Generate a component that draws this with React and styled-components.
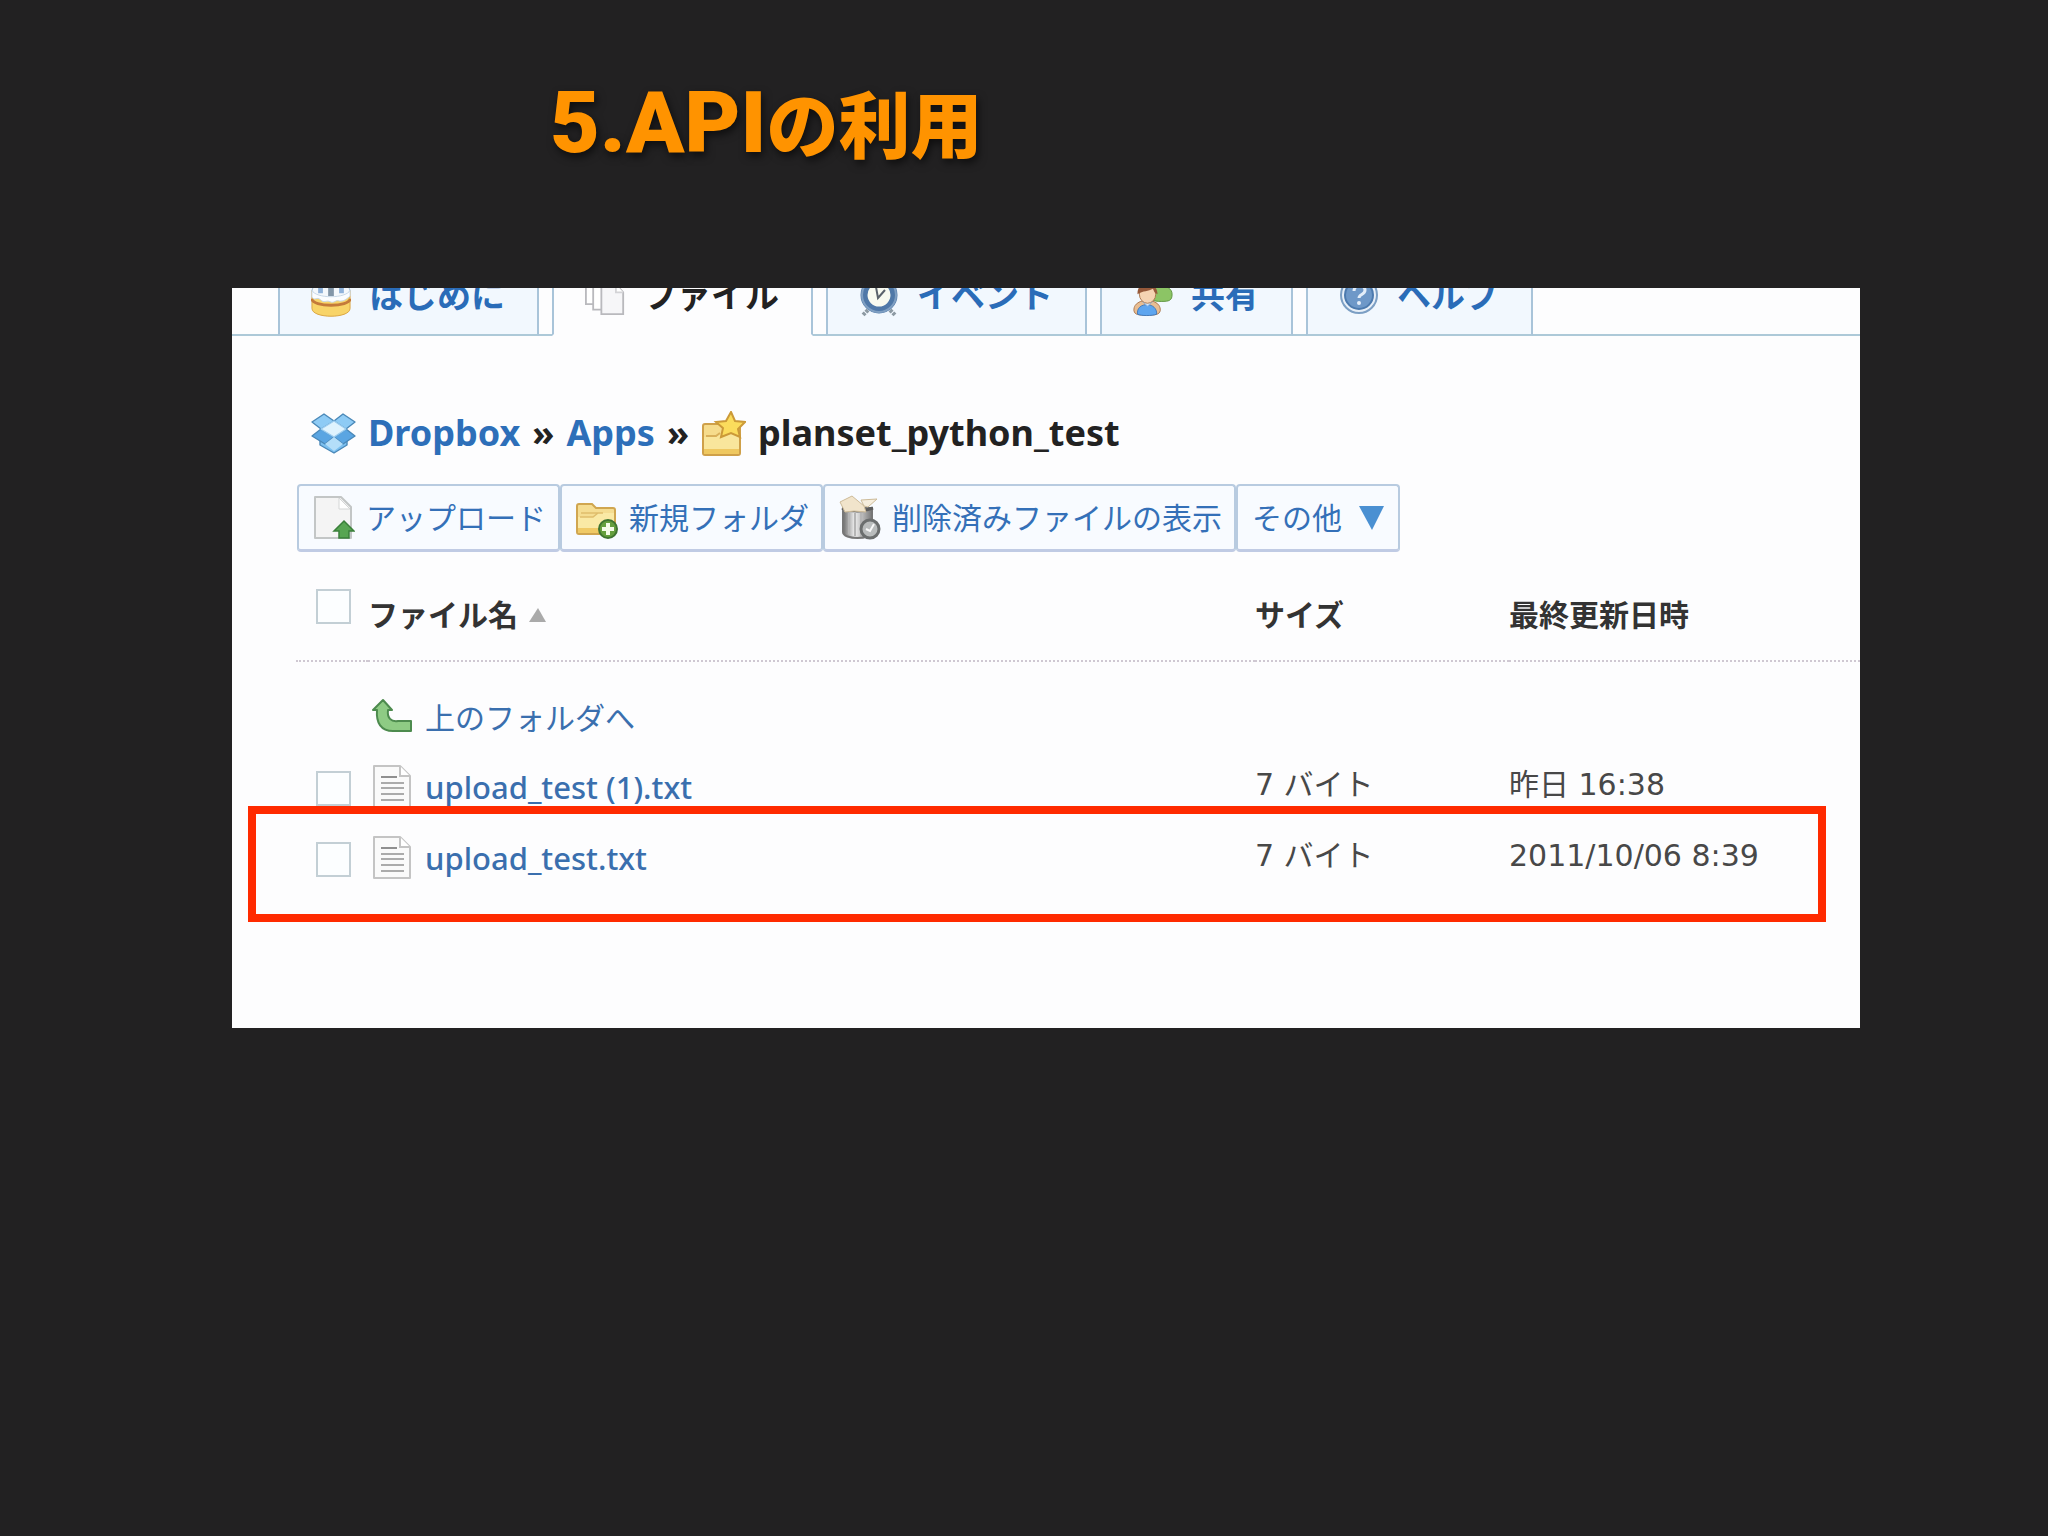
import React from 'react';
import styled, { createGlobalStyle } from 'styled-components';

const jp = '"Noto Sans CJK JP", sans-serif';

const tabs = [
    { label: 'はじめに', icon: CakeIcon },
    { label: 'ファイル', icon: PagesIcon, active: true },
    { label: 'イベント', icon: ClockIcon },
    { label: '共有', icon: PeopleIcon },
    { label: 'ヘルプ', icon: HelpIcon },
];

const actions = [
    { label: 'アップロード', icon: UploadIcon },
    { label: '新規フォルダ', icon: NewFolderIcon },
    { label: '削除済みファイルの表示', icon: TrashIcon },
];

const files = [
    { name: 'upload_test (1).txt', size: '7 バイト', date: '昨日 16:38' },
    { name: 'upload_test.txt', size: '7 バイト', date: '2011/10/06 8:39' },
];

function CakeIcon() {
    return (
        <svg width="42" height="44" viewBox="0 0 42 44">
            <path d="M1 16v19c0 11 40 11 40 0V16z" fill="#f8d468" stroke="#d9a441" />
            <path d="M1 25c0 9 40 9 40 0" fill="none" stroke="#c47a3a" strokeWidth="3" />
            <ellipse cx="21" cy="16" rx="20" ry="9" fill="#f4f8fc" stroke="#9db9d4" />
            <path d="M1 16v7c3 5 5-1 9 3s6 0 10 2 6-2 9-1 7 0 12-5v-6c-4 9-36 9-40 0z" fill="#fbfdff" stroke="#c5d6e6" />
            <path d="M10 4v15M32 4v15" stroke="#8fb2da" strokeWidth="5" />
            <path d="M21 4v18" stroke="#8296a8" strokeWidth="6" />
            <path d="M21 0v11" stroke="#e3c255" strokeWidth="4" />
        </svg>
    );
}

function PagesIcon() {
    return (
        <svg width="44" height="44" viewBox="0 0 44 44" stroke="#b9b9bd" strokeWidth="2">
            <path d="M1 2h18v29H1z" fill="#fff" />
            <path d="M9 5h18v32H9z" fill="#fff" />
            <path d="M18 9h16l8 9v24H18z" fill="#f6f6f8" />
            <path d="M34 9v9h8" fill="#fff" stroke="#d3d3d6" />
        </svg>
    );
}

function ClockIcon() {
    return (
        <svg width="40" height="44" viewBox="0 0 40 44">
            <path d="M9 36l-5 5M31 36l5 5" stroke="#8d9aa3" strokeWidth="4" strokeDasharray="3 1" />
            <circle cx="20" cy="21" r="15" fill="#f8faf0" stroke="#4f78a8" strokeWidth="7" />
            <circle cx="20" cy="21" r="17" fill="none" stroke="#7f9fc2" strokeWidth="2" />
            <path d="M17 13l2 11 7-8" fill="none" stroke="#5a626b" strokeWidth="2" />
        </svg>
    );
}

function PeopleIcon() {
    return (
        <svg width="44" height="44" viewBox="0 0 44 44">
            <circle cx="31" cy="9" r="8" fill="#b98c58" />
            <path d="M19 20c0-12 24-12 24 0 0 7-3 8-12 8s-12-2-12-8z" fill="#8cc465" stroke="#5e9440" />
            <path d="M1 38c-1-15 30-15 29 0-1 5-6 5-15 5s-13 0-14-5z" fill="#e8bd92" stroke="#a9744a" />
            <path d="M5 42c-2-14 22-14 21 0-5 2-17 2-21 0z" fill="#5da5ef" stroke="#3d76b8" />
            <path d="M10 28l6 5 6-5" fill="#d5e8fb" stroke="#8bb6e4" />
            <ellipse cx="16" cy="20" rx="9" ry="10" fill="#f5d3b2" stroke="#a9744a" />
            <path d="M5 20C4 4 26 3 27 20c-3-1-4-3-5-6-5 3-11 2-17 6z" fill="#96593a" />
        </svg>
    );
}

function HelpIcon() {
    return (
        <svg width="40" height="44" viewBox="0 0 40 44">
            <circle cx="20" cy="21" r="18" fill="#e7eff8" stroke="#7c9fc4" strokeWidth="2" />
            <circle cx="20" cy="21" r="14" fill="#6e98c8" stroke="#4c7aae" strokeWidth="2" />
            <path d="M15 17c0-7 11-7 11-1 0 5-6 4-6 8" fill="none" stroke="#e4eef9" strokeWidth="3" />
            <circle cx="20" cy="29" r="2" fill="#e4eef9" />
        </svg>
    );
}

function BoxLogo() {
    return (
        <svg width="45" height="42" viewBox="0 0 45 42" stroke="#4a88b8" strokeWidth="1.4" strokeLinejoin="round">
            <path d="M9 22v11l14 8 13-8V22l-13-5z" fill="#7cc0f0" />
            <path d="M13 2l10 7-13 8L1 10z" fill="#8ecbf5" />
            <path d="M32 2l12 8-9 7-12-8z" fill="#8ecbf5" />
            <path d="M10 17l13 8-9 7L1 24z" fill="#5aa5e2" />
            <path d="M35 17l9 7-12 8-9-7z" fill="#5aa5e2" />
            <path d="M23 9l12 8-12 8-13-8z" fill="#dff3fe" stroke="#9ccdf0" />
            <path d="M14 32l9-7 9 7-9 7z" fill="#b4def9" stroke="none" />
        </svg>
    );
}

function StarFolderIcon() {
    return (
        <svg width="45" height="45" viewBox="0 0 45 45">
            <path d="M2 15q0-2 2-2h14l4 4h17v25q0 2-2 2H4q-2 0-2-2z" fill="#f6dc8c" stroke="#cfa049" strokeWidth="2" />
            <path d="M3 26h12l4-4h19v20H3z" fill="#f9e69c" />
            <path d="M5 25h10l4-3" fill="none" stroke="#d9b05a" strokeWidth="2" />
            <path d="M3 38h35v5H3z" fill="#efc860" />
            <path d="M30 1l4 9 10 1-7 7 2 8-9-4-10 4 2-9-7-6 10-1z" fill="#fbdc5c" stroke="#cc9a38" strokeWidth="2" />
        </svg>
    );
}

function UploadIcon() {
    return (
        <svg width="42" height="45" viewBox="0 0 42 45">
            <path d="M2 2h26l10 10v31H2z" fill="#f4f4f4" stroke="#c3c6c6" strokeWidth="2" strokeLinejoin="round" />
            <path d="M26 3v11h11z" fill="#fff" stroke="#d4d6d6" />
            <path d="M31 26l10 10h-5v7H26v-7h-5z" fill="#57a552" stroke="#3a7f3a" strokeWidth="1.5" />
        </svg>
    );
}

function NewFolderIcon() {
    return (
        <svg width="42" height="45" viewBox="0 0 42 45">
            <path d="M1 11q0-2 2-2h13l4 4h17q2 0 2 2v22q0 2-2 2H3q-2 0-2-2z" fill="#f5dd92" stroke="#d0a650" strokeWidth="2" />
            <path d="M2 22h15l5-4h16v19H2z" fill="#fae9a5" />
            <path d="M5 18h22M4 22h13l5-4" fill="none" stroke="#dfbd6c" strokeWidth="1.5" />
            <path d="M2 33h36v5H2z" fill="#f0ca66" />
            <circle cx="32" cy="34" r="9" fill="#659f3d" stroke="#3f7430" strokeWidth="2" />
            <path d="M32 28v12M26 34h12" stroke="#f4fbe8" strokeWidth="4" />
        </svg>
    );
}

function TrashIcon() {
    return (
        <svg width="42" height="45" viewBox="0 0 42 45">
            <defs>
                <linearGradient id="can" x1="0" x2="1" y1="0" y2="0">
                    <stop offset="0" stopColor="#6c6c6c" />
                    <stop offset="0.4" stopColor="#efefef" />
                    <stop offset="1" stopColor="#777" />
                </linearGradient>
            </defs>
            <path d="M4 13h29v24c0 8-29 8-29 0z" fill="url(#can)" stroke="#777" strokeWidth="2" />
            <path d="M10 18v21M16 18v23M22 18v23" stroke="#b5b5b5" strokeWidth="2" />
            <path d="M3 13q15 6 31 0" fill="none" stroke="#5c5c5c" strokeWidth="3" />
            <path d="M1 7l12-6 12 10 2 6-12-1-9 1z" fill="#f1e4cb" stroke="#cdbb99" />
            <path d="M22 5l16-1-9 8-4-1z" fill="#f6eedd" stroke="#cdbb99" />
            <circle cx="31" cy="34" r="9" fill="#b9bcbc" stroke="#6b6e6e" strokeWidth="3" />
            <path d="M27 34l4 2 4-7" fill="none" stroke="#f8f8f8" strokeWidth="2" />
        </svg>
    );
}

function UpArrowIcon() {
    return (
        <svg width="42" height="36" viewBox="0 0 42 36">
            <path d="M12 2l9 10h-4c-1 8 3 12 10 11h13v10H22C10 33 5 25 6 12H2z" fill="#8ecb84" stroke="#4d8b4e" strokeWidth="2" strokeLinejoin="round" />
        </svg>
    );
}

function TextFileIcon() {
    return (
        <svg width="42" height="45" viewBox="0 0 42 45">
            <path d="M3 2h26l10 10v31H3z" fill="#fafafa" stroke="#c4c4c4" strokeWidth="2" strokeLinejoin="round" />
            <path d="M29 2v10h10" fill="#fff" stroke="#c4c4c4" strokeWidth="2" />
            <path d="M10 13h16" stroke="#8f8f8f" strokeWidth="2" />
            <path d="M10 19h23M10 24h23M10 30h23M10 36h23" stroke="#ababab" strokeWidth="2" />
        </svg>
    );
}

export default function App() {
    return (
        <>
            <GlobalStyle />
            <Slide>
                <Title><span>5.API</span>の利用</Title>
                <Panel>
                    <Tabs>
                        {tabs.map(({ label, icon: Icon, active }) => (
                            <Tab key={label} href="#" $active={active}>
                                <TabIcon><Icon /></TabIcon>
                                {label}
                            </Tab>
                        ))}
                    </Tabs>
                    <Content>
                        <Breadcrumb>
                            <CrumbIcon><BoxLogo /></CrumbIcon>
                            <a href="#">Dropbox</a>
                            <span>»</span>
                            <a href="#">Apps</a>
                            <span>»</span>
                            <CrumbIcon><StarFolderIcon /></CrumbIcon>
                            <strong>planset_python_test</strong>
                        </Breadcrumb>
                        <Toolbar>
                            {actions.map(({ label, icon: Icon }) => (
                                <ToolButton key={label} type="button">
                                    <Icon />
                                    <ToolLabel>{label}</ToolLabel>
                                </ToolButton>
                            ))}
                            <ToolButton type="button">
                                <ToolLabel>その他</ToolLabel>
                                <MoreArrow viewBox="0 0 25 24"><path d="M0 0h25L13 24z" /></MoreArrow>
                            </ToolButton>
                        </Toolbar>
                        <FileTable>
                            <thead>
                                <tr>
                                    <CheckHead><Check type="checkbox" aria-label="すべて選択" /></CheckHead>
                                    <NameHead>
                                        ファイル名
                                        <SortArrow viewBox="0 0 17 14"><path d="M0 14h17L9 0z" /></SortArrow>
                                    </NameHead>
                                    <SizeHead>サイズ</SizeHead>
                                    <DateHead>最終更新日時</DateHead>
                                </tr>
                            </thead>
                            <tbody>
                                <tr>
                                    <td />
                                    <td colSpan="3">
                                        <FolderLink href="#"><UpArrowIcon />上のフォルダへ</FolderLink>
                                    </td>
                                </tr>
                                {files.map(file => (
                                    <tr key={file.name}>
                                        <td><Check type="checkbox" aria-label={file.name} /></td>
                                        <td><FileLink href="#"><TextFileIcon />{file.name}</FileLink></td>
                                        <InfoCell>{file.size}</InfoCell>
                                        <InfoCell>{file.date}</InfoCell>
                                    </tr>
                                ))}
                            </tbody>
                        </FileTable>
                    </Content>
                    <Highlight />
                </Panel>
            </Slide>
        </>
    );
}

const GlobalStyle = createGlobalStyle`
    * {
        box-sizing: border-box;
    }
    body {
        margin: 0;
        background: #222122;
    }
`;

const Slide = styled.main`
    min-height: 100vh;
    padding: 69px 188px 72px 232px;
`;

const Title = styled.h1`
    margin: 0 0 113px;
    padding-left: 318px;
    font-family: ${jp};
    font-size: 72px;
    font-weight: 900;
    line-height: 104px;
    color: #ff9300;
    text-shadow: 2px 4px 8px rgba(0, 0, 0, 0.6);
    span {
        font-family: Roboto, sans-serif;
        font-size: 86px;
    }
`;

const Panel = styled.section`
    position: relative;
    padding-bottom: 133px;
    background: #fdfdfe;
    overflow: hidden;
`;

/* the strip is lower than its tabs, so their tops are cut off */
const Tabs = styled.nav`
    display: flex;
    align-items: flex-end;
    gap: 13px;
    height: 48px;
    padding-left: 46px;
    overflow: hidden;
    box-shadow: inset 0 -2px #adc9d8;
`;

const Tab = styled.a`
    display: flex;
    align-items: center;
    gap: 18px;
    height: 80px;
    padding: 0 32px 4px 31px;
    border: 2px solid #a9c4d9;
    border-bottom-color: ${props => (props.$active ? '#fdfdfe' : '#adc9d8')};
    background: ${props => (props.$active ? '#fdfdfe' : '#f2f8fe')};
    color: ${props => (props.$active ? '#222' : '#2a6cb8')};
    font-family: ${jp};
    font-size: 34px;
    font-weight: 700;
    line-height: 48px;
    white-space: nowrap;
    text-decoration: none;
`;

const TabIcon = styled.span`
    display: flex;
    flex: none;
    width: 40px;
    padding-top: 4px;
`;

const Content = styled.div`
    padding-left: 64px;
`;

const Breadcrumb = styled.div`
    display: flex;
    align-items: center;
    gap: 12px;
    padding: 70px 0 24px 15px;
    color: #222;
    font-family: "Noto Sans", sans-serif;
    font-size: 36px;
    font-weight: 700;
    line-height: 54px;
    a {
        color: #2d6fb9;
        text-decoration: none;
    }
    strong {
        font-weight: 700;
    }
`;

const CrumbIcon = styled.span`
    display: flex;
`;

const Toolbar = styled.div`
    display: flex;
    padding-left: 1px;
`;

const ToolButton = styled.button`
    display: flex;
    align-items: center;
    gap: 11px;
    height: 68px;
    padding: 0 12px 0 14px;
    border: 2px solid #b8cbe0;
    border-bottom: 3px solid #c0cbe4;
    border-radius: 4px;
    background: #f8fbff;
    color: #3470b8;
    font-family: ${jp};
    font-size: 30px;
    line-height: 44px;
    white-space: nowrap;
`;

const ToolLabel = styled.span`
    padding-bottom: 4px;
`;

const MoreArrow = styled.svg`
    width: 25px;
    height: 24px;
    margin: 0 2px 0 6px;
    fill: #4a90d2;
`;

const FileTable = styled.table`
    width: 100%;
    table-layout: fixed;
    border-collapse: collapse;
    th {
        height: 109px;
        padding: 14px 0 0;
        border-bottom: 2px dotted #cfc8d2;
        color: #333;
        font-family: ${jp};
        font-size: 30px;
        font-weight: 700;
        line-height: 44px;
        text-align: left;
    }
    th:first-child {
        padding: 0;
    }
    td {
        height: 71px;
        padding: 0;
    }
    tbody::before {
        content: '';
        display: block;
        height: 20px;
    }
`;

const CheckHead = styled.th`
    width: 72px;
`;

const NameHead = styled.th`
    width: auto;
`;

const SizeHead = styled.th`
    width: 254px;
`;

const DateHead = styled.th`
    width: 351px;
`;

const Check = styled.input`
    appearance: none;
    display: block;
    width: 35px;
    height: 35px;
    margin: 0 0 0 20px;
    border: 2px solid #c3cfd5;
    background: #fcfeff;
`;

const SortArrow = styled.svg`
    width: 17px;
    height: 14px;
    margin-left: 11px;
    vertical-align: 4px;
    fill: #aaa;
`;

const FileLink = styled.a`
    display: flex;
    align-items: center;
    gap: 12px;
    padding: 0 0 4px 3px;
    color: #3a6fae;
    font-family: "Noto Sans", ${jp};
    font-size: 31px;
    font-weight: 500;
    line-height: 44px;
    text-decoration: none;
    white-space: nowrap;
`;

const FolderLink = styled(FileLink)`
    font-family: ${jp};
    font-size: 30px;
    font-weight: 400;
`;

const InfoCell = styled.td`
    && {
        padding-bottom: 8px;
    }
    color: #484848;
    font-family: "DejaVu Sans", ${jp};
    font-size: 30px;
    line-height: 44px;
    white-space: nowrap;
`;

const Highlight = styled.div`
    position: absolute;
    top: 518px;
    left: 16px;
    right: 34px;
    height: 116px;
    border: 8px solid #ff2a00;
    pointer-events: none;
`;
